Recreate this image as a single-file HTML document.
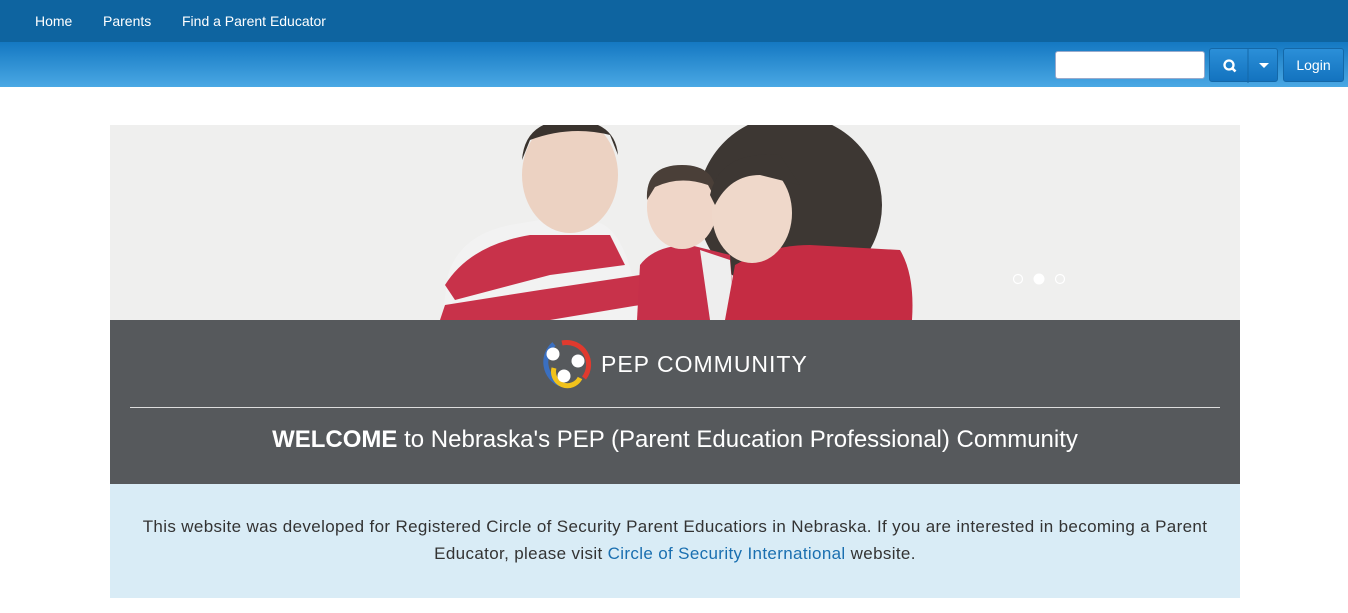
<!DOCTYPE html>
<html><head><meta charset="utf-8"><style>
body{margin:0;background:#fff;font-family:"Liberation Sans",Arial,sans-serif;width:1348px;height:613px;overflow:hidden}
.top{height:42px;background:#0e64a0;}
.top a{position:absolute;top:13px;color:#fff;font-size:14px;text-decoration:none}
.bar{position:absolute;top:42px;left:0;width:1348px;height:45px;background:linear-gradient(#1478c2,#4aa8e4)}
.inp{position:absolute;left:1055px;top:51px;width:148px;height:26px;background:#fff;border:1px solid #9ac;border-radius:3px}
.btn{position:absolute;top:48px;height:34px;background:linear-gradient(#2b8fd8,#1373bf);border-radius:3px;border:1px solid #1468a8;box-sizing:border-box;color:#fff}
.banner{position:absolute;left:110px;top:125px;width:1130px;height:195px;background:#efefee;overflow:hidden}
.gray{position:absolute;left:110px;top:320px;width:1130px;height:164px;background:#56595c}
.blue{position:absolute;left:110px;top:484px;width:1130px;height:114px;background:#d9ecf6;text-align:center;color:#333;font-size:17px;letter-spacing:0.35px;line-height:27px}
</style></head><body>
<div class="top"><a style="left:35px">Home</a><a style="left:103px">Parents</a><a style="left:182px">Find a Parent Educator</a></div>
<div class="bar"></div>
<div class="inp"></div>
<div class="btn" style="left:1209px;width:69px">
<svg width="69" height="34" style="position:absolute;left:0;top:0"><circle cx="19" cy="16" r="4.5" fill="none" stroke="#fff" stroke-width="2.3"/><path d="M22 19l3.5 3.5" stroke="#fff" stroke-width="2.6"/><line x1="38" y1="0" x2="38" y2="34" stroke="#1468a8"/><path d="M49 14h10l-5 5z" fill="#fff"/></svg></div>
<div class="btn" style="left:1283px;width:61px;font-size:14px;line-height:32px;text-align:center">Login</div>
<div class="banner"><svg width="1130" height="195">
<ellipse cx="680" cy="80" rx="92" ry="90" fill="#3d3733"/>
<path d="M332 195L338 150Q350 110 400 100L430 95L490 98Q520 110 530 195Z" fill="#f2f2f2"/>
<path d="M335 160Q360 120 420 110L500 110L515 140L440 150L345 175Z" fill="#c8324a"/>
<path d="M330 195L335 180L430 165L530 150L530 180L440 195Z" fill="#c8324a"/>
<ellipse cx="460" cy="50" rx="48" ry="58" fill="#ecd2c2"/>
<path d="M412 35Q415 -5 460 -5Q505 -5 508 30L500 10Q460 0 420 15Z" fill="#3a332e"/>
<path d="M527 195L530 140Q545 120 580 120L620 130L625 195Z" fill="#c6304a"/>
<path d="M590 125L620 135L625 195L600 195Z" fill="#eee"/>
<ellipse cx="572" cy="82" rx="35" ry="42" fill="#efd6c8"/>
<path d="M537 75Q535 40 572 40Q608 40 606 75L598 60Q570 50 545 62Z" fill="#4a3f38"/>
<path d="M615 195L625 140Q660 120 700 120L790 125Q805 150 802 195Z" fill="#c52c43"/>
<ellipse cx="642" cy="88" rx="40" ry="50" fill="#efd8ca"/>
<path d="M600 70Q610 25 670 30L690 60L650 50Q620 50 605 80Z" fill="#3d3733"/>
<circle cx="908" cy="154" r="4.5" fill="none" stroke="#fff" stroke-width="1.2"/>
<circle cx="929" cy="154" r="5.5" fill="#fff"/>
<circle cx="950" cy="154" r="4.5" fill="none" stroke="#fff" stroke-width="1.2"/>
</svg></div>
<div class="gray">
<svg width="56" height="52" style="position:absolute;left:430px;top:18px">
<path d="M14 6A24 24 0 0 0 20 46" fill="none" stroke="#3a6fc0" stroke-width="5"/>
<path d="M22 5A22 22 0 0 1 44 40" fill="none" stroke="#e03a2e" stroke-width="5"/>
<path d="M14 30A14 14 0 0 0 40 40" fill="none" stroke="#f1c21b" stroke-width="5"/>
<circle cx="13" cy="16" r="6.5" fill="#fff"/><circle cx="38" cy="23" r="6.5" fill="#fff"/><circle cx="24" cy="38" r="6.5" fill="#fff"/>
</svg>
<div style="position:absolute;left:491px;top:31px;color:#fff;font-size:23px;letter-spacing:1px">PEP COMMUNITY</div>
<div style="position:absolute;left:20px;top:87px;width:1090px;height:1px;background:#ddd"></div>
<div style="position:absolute;left:0;width:1130px;top:106px;text-align:center;color:#fff;font-size:24px"><b>WELCOME</b> to Nebraska's PEP (Parent Education Professional) Community</div>
</div>
<div class="blue"><div style="padding:29px 20px 0">This website was developed for Registered Circle of Security Parent Educatiors in Nebraska. If you are interested in becoming a Parent Educator, please visit <span style="color:#1a6fb0">Circle of Security International</span> website.</div></div>
</body></html>
